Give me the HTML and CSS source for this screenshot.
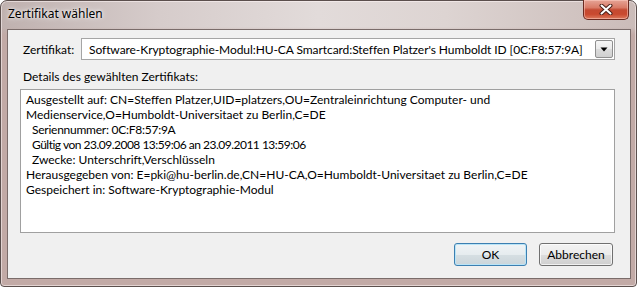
FILE: index.html
```html
<!DOCTYPE html>
<html lang="de">
<head>
<meta charset="utf-8">
<title>Zertifikat wählen</title>
<link rel="stylesheet" href="styles.css">
</head>
<body>
<div class="window">
  <div class="titlebar">
    <span class="title">Zertifikat wählen</span>
    <button class="close" aria-label="Schließen">
      <svg width="14" height="11" viewBox="0 0 14 11">
        <path d="M2.5 1.5 L11.5 9.5 M11.5 1.5 L2.5 9.5" stroke="#4a1f18" stroke-width="4" stroke-linecap="round" fill="none"/>
        <path d="M2.5 1.5 L11.5 9.5 M11.5 1.5 L2.5 9.5" stroke="#ffffff" stroke-width="2" stroke-linecap="round" fill="none"/>
      </svg>
    </button>
  </div>
  <div class="client">
    <div class="cert-row">
      <span class="cert-label">Zertifikat:</span>
      <div class="combo">
        <span class="combo-text">Software-Kryptographie-Modul:HU-CA Smartcard:Steffen Platzer's Humboldt ID [0C:F8:57:9A]</span>
        <span class="combo-btn">
          <svg width="8" height="5" viewBox="0 0 8 5"><path d="M0.5 0.5 H7.5 L4 4.5 Z" fill="#000"/></svg>
        </span>
      </div>
    </div>
    <div class="details-label">Details des gewählten Zertifikats:</div>
    <div class="details">
      <div class="line">Ausgestellt auf: CN=Steffen Platzer,UID=platzers,OU=Zentraleinrichtung Computer- und</div>
      <div class="line">Medienservice,O=Humboldt-Universitaet zu Berlin,C=DE</div>
      <div class="line indent serial">Seriennummer: 0C:F8:57:9A</div>
      <div class="line indent numeric">Gültig von 23.09.2008 13:59:06 an 23.09.2011 13:59:06</div>
      <div class="line indent">Zwecke: Unterschrift,Verschlüsseln</div>
      <div class="line">Herausgegeben von: E=pki@hu-berlin.de,CN=HU-CA,O=Humboldt-Universitaet zu Berlin,C=DE</div>
      <div class="line">Gespeichert in: Software-Kryptographie-Modul</div>
    </div>
    <div class="buttons">
      <button class="btn btn-default">OK</button>
      <button class="btn">Abbrechen</button>
    </div>
  </div>
</div>
</body>
</html>
```
FILE: styles.css
```css
html, body {
  margin: 0;
  padding: 0;
  background: #ffffff;
}
body {
  width: 637px;
  height: 287px;
  overflow: hidden;
  font-family: Lato, "Noto Sans", sans-serif;
  font-size: 12px;
  color: #000;
}
.window {
  box-sizing: border-box;
  width: 637px;
  height: 287px;
  border: 1px solid #5b4f4d;
  border-radius: 7px 7px 4px 4px;
  padding: 0 5px 7px 6px;
  display: flex;
  flex-direction: column;
  background:
    linear-gradient(to bottom, rgba(0,0,0,0) 0, rgba(0,0,0,0) 26px, #c2aaa6 34px),
    linear-gradient(90deg, #bfb1af 0%, #d6cccb 25%, #e2dbda 50%, #ddd4d2 70%, #cbbcb9 100%);
  box-shadow: inset 0 0 0 1px rgba(255, 245, 245, 0.55);
}
.titlebar {
  height: 28px;
  display: flex;
  align-items: flex-start;
  flex: none;
}
.title {
  font-family: "Noto Sans", sans-serif;
  font-size: 12px;
  line-height: 16px;
  padding: 5px 0 0 1px;
  color: #000;
  text-shadow: 0 0 6px rgba(255,255,255,0.9), 0 0 3px rgba(255,255,255,0.9);
}
.close {
  margin: -1px 2px 0 auto;
  width: 46px;
  height: 20px;
  padding: 0;
  border: 1px solid #6a2a21;
  border-top: none;
  border-radius: 0 0 5px 5px;
  background: linear-gradient(to bottom, #e6a496 0%, #d97b67 40%, #c44a32 52%, #c9492f 75%, #dc7a5e 100%);
  box-shadow: inset 0 0 0 1px rgba(255, 210, 200, 0.5);
  display: flex;
  align-items: center;
  justify-content: center;
}
.client {
  flex: 1;
  border: 1px solid #7a6c6a;
  background: #f0f0f0;
  display: flex;
  flex-direction: column;
}
.cert-row {
  display: flex;
  align-items: center;
  margin: 8px 15px 0 15px;
  height: 22px;
}
.cert-label {
  width: 58px;
  flex: none;
}
.combo {
  flex: 1;
  box-sizing: border-box;
  height: 22px;
  border: 1px solid #a5a5a5;
  background: #fff;
  display: flex;
  align-items: center;
  padding: 0 0 0 7px;
}
.combo-text {
  flex: 1;
  white-space: nowrap;
  overflow: hidden;
  letter-spacing: -0.07px;
}
.combo-btn {
  box-sizing: border-box;
  width: 18px;
  height: 18px;
  margin-right: 1px;
  border: 1px solid #8f8f8f;
  border-radius: 2px;
  background: linear-gradient(to bottom, #f6f6f6 0%, #eaeaea 50%, #dcdcdc 50%, #d0d0d0 100%);
  display: flex;
  align-items: center;
  justify-content: center;
}
.details-label {
  margin: 9px 15px 0 15px;
  line-height: 15px;
}
.details {
  box-sizing: border-box;
  height: 144px;
  margin: 5px 15px 0 12px;
  border: 1px solid #a0a0a0;
  background: #fff;
  padding: 2px 5px;
  line-height: 15px;
}
.line {
  white-space: nowrap;
}
.indent {
  padding-left: 6px;
}
.numeric {
  letter-spacing: -0.5px;
}
.serial {
  letter-spacing: -0.25px;
}
.buttons {
  display: flex;
  justify-content: flex-end;
  gap: 12px;
  margin: 10px 17px 0 0;
}
.btn {
  box-sizing: border-box;
  width: 74px;
  height: 23px;
  font-family: inherit;
  font-size: 12px;
  color: #000;
  border: 1px solid #707070;
  border-radius: 3px;
  background: linear-gradient(to bottom, #f2f2f2 0%, #ebebeb 50%, #dddddd 50%, #cfcfcf 100%);
  box-shadow: inset 0 0 0 1px rgba(255,255,255,0.7);
  padding: 0;
}
.btn-default {
  width: 73px;
  border-color: #3c7fb1;
  box-shadow: inset 0 0 0 1px #b9e4f7;
  background: linear-gradient(to bottom, #f0f4f6 0%, #e6ecef 50%, #d6dfe3 50%, #cbd5da 100%);
}
```
